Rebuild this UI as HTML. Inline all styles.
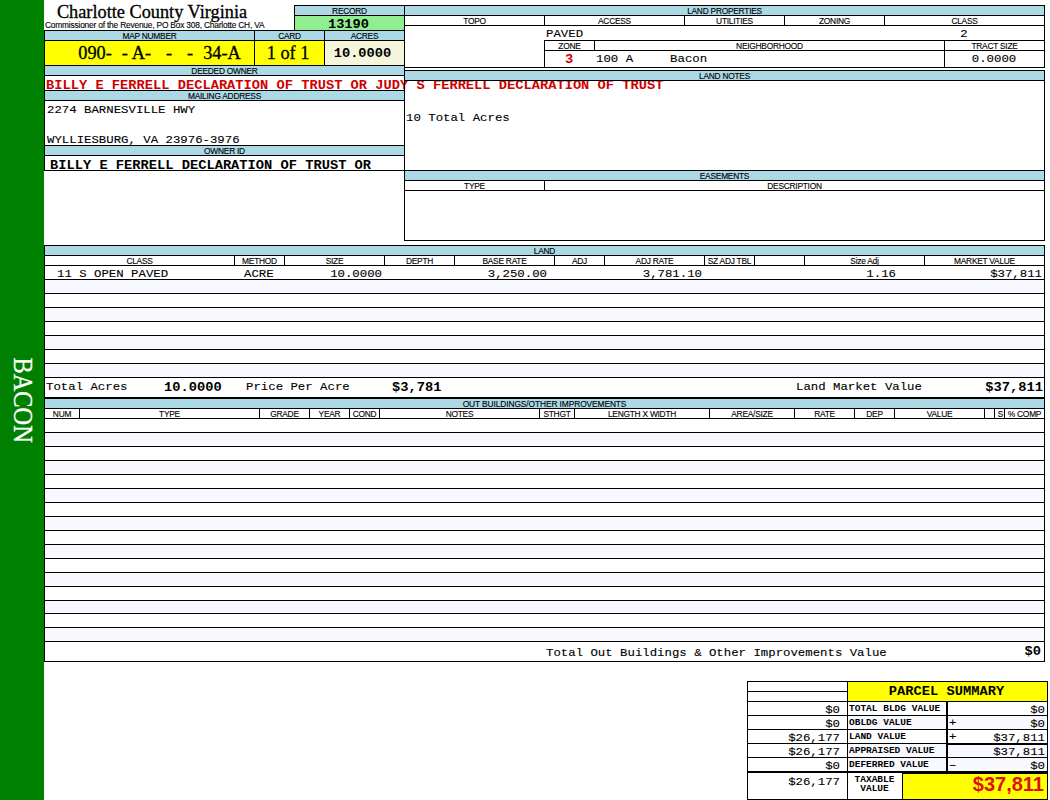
<!DOCTYPE html>
<html><head><meta charset="utf-8"><title>Charlotte County Virginia</title>
<style>
html,body{margin:0;padding:0;background:#fff}
body{width:1050px;height:800px;position:relative;overflow:hidden;font-family:"Liberation Sans",sans-serif}
.b{position:absolute;box-sizing:border-box;border:1px solid #000;overflow:hidden;white-space:nowrap}
.t{position:absolute;white-space:pre}
.t.m{transform:scaleY(.92);transform-origin:0 0}
.t.m.bold{transform:scaleY(.87)}
.t.ms{transform:scaleY(.9);transform-origin:0 0}
.t.m{-webkit-text-stroke:.12px currentColor}
.t.m.bold{-webkit-text-stroke:0}
.h{background:#add8e6;font:8.4px/11px "Liberation Sans",sans-serif;letter-spacing:-.25px;text-align:center;color:#000;-webkit-text-stroke:.12px #000}
.hw{font:8.4px/11px "Liberation Sans",sans-serif;letter-spacing:-.25px;text-align:center;color:#000;-webkit-text-stroke:.12px #000}
.y{background:#ffff00}
.lg{background:#90ee90}
.beige{background:#f5f5dc}
.alt{background:#f8f8ff}
.big{font:18.3px/23px "Liberation Serif",serif;text-align:center;-webkit-text-stroke:.3px #000}
.m{font:12.35px/13px "Liberation Mono",monospace;color:#000}
.mb{font:bold 13.72px/13px "Liberation Mono",monospace}
.ms{font:bold 9.5px/10px "Liberation Mono",monospace}
.bold{font-weight:bold;font-size:13.72px}
.sp{}
.red{color:#d00000}
.title{font:18.3px/20px "Liberation Serif",serif;-webkit-text-stroke:.3px #000}
.sub{font:8.4px/9px "Liberation Sans",sans-serif;letter-spacing:-.2px;-webkit-text-stroke:.12px #000}
.ln{position:absolute;background:#000}
.green{position:absolute;left:0;top:0;width:44px;height:800px;background:#008000}
.bacon{-webkit-text-stroke:.3px #fff;position:absolute;left:8.5px;top:350px;width:29px;height:100px;color:#fff;font:27.5px/29px "Liberation Serif",serif;writing-mode:vertical-rl;text-align:center;transform:scaleY(.887)}
.tv{position:absolute;right:3px;top:0px;font:bold 20px/24px "Liberation Sans",sans-serif;color:#e01010}
</style></head>
<body>
<div class="green"></div>
<div class="bacon">BACON</div>
<div class="t title" style="left:44px;top:2px;width:216px;text-align:center">Charlotte County Virginia</div>
<div class="t sub" style="left:45px;top:21px;">Commissioner of the Revenue, PO Box 308, Charlotte CH, VA</div>
<div class="b h" style="left:44px;top:30px;width:211px;height:11px;">MAP NUMBER</div>
<div class="b h" style="left:254px;top:30px;width:71px;height:11px;">CARD</div>
<div class="b h" style="left:324px;top:30px;width:81px;height:11px;">ACRES</div>
<div class="b y big" style="left:44px;top:40px;width:211px;height:26px;padding-left:20px;line-height:25px;white-space:pre;word-spacing:.42px">090-  - A-   -   -  34-A</div>
<div class="b y big" style="left:254px;top:40px;width:71px;height:26px;padding-right:3px;line-height:25px">1 of 1</div>
<div class="b beige" style="left:324px;top:40px;width:81px;height:26px;"></div>
<div class="t m bold" style="left:324px;top:47.5px;width:77px;text-align:center">10.0000</div>
<div class="b h" style="left:294px;top:5px;width:111px;height:11px;">RECORD</div>
<div class="b lg" style="left:294px;top:15px;width:111px;height:16px;"></div>
<div class="t m bold" style="left:294px;top:19.0px;width:109px;text-align:center">13190</div>
<div class="b h" style="left:44px;top:65px;width:361px;height:11px;">DEEDED OWNER</div>
<div class="b " style="left:44px;top:75px;width:361px;height:16px;"></div>
<div class="b h" style="left:44px;top:90px;width:361px;height:11px;">MAILING ADDRESS</div>
<div class="b " style="left:44px;top:100px;width:361px;height:46px;"></div>
<div class="b h" style="left:44px;top:145px;width:361px;height:11px;">OWNER ID</div>
<div class="b " style="left:44px;top:155px;width:361px;height:16px;"></div>
<div class="t m red bold" style="left:46px;top:79.5px;">BILLY E FERRELL DECLARATION OF TRUST OR JUDY S FERRELL DECLARATION OF TRUST</div>
<div class="t m" style="left:47px;top:105.0px;">2274 BARNESVILLE HWY</div>
<div class="t m" style="left:47px;top:135.0px;">WYLLIESBURG, VA 23976-3976</div>
<div class="t m bold" style="left:50px;top:159.5px;">BILLY E FERRELL DECLARATION OF TRUST OR</div>
<div class="b h" style="left:404px;top:5px;width:641px;height:11px;">LAND PROPERTIES</div>
<div class="b " style="left:404px;top:15px;width:641px;height:53px;"></div>
<div class="b hw" style="left:404px;top:15px;width:141px;height:11px;">TOPO</div>
<div class="b hw" style="left:544px;top:15px;width:141px;height:11px;">ACCESS</div>
<div class="b hw" style="left:684px;top:15px;width:101px;height:11px;">UTILITIES</div>
<div class="b hw" style="left:784px;top:15px;width:101px;height:11px;">ZONING</div>
<div class="b hw" style="left:884px;top:15px;width:161px;height:11px;">CLASS</div>
<div class="b hw" style="left:544px;top:40px;width:51px;height:11px;">ZONE</div>
<div class="b hw" style="left:594px;top:40px;width:351px;height:11px;">NEIGHBORHOOD</div>
<div class="b hw" style="left:944px;top:40px;width:101px;height:11px;">TRACT SIZE</div>
<div class="b " style="left:544px;top:50px;width:501px;height:18px;"></div>
<div class="b " style="left:944px;top:50px;width:101px;height:18px;"></div>
<div class="t m" style="left:546px;top:28.5px;">PAVED</div>
<div class="t m" style="left:884px;top:28.5px;width:160px;text-align:center">2</div>
<div class="t m red bold" style="left:544px;top:53.5px;width:50px;text-align:center">3</div>
<div class="t m" style="left:596px;top:54.0px;">100 A&nbsp;&nbsp;&nbsp;&nbsp;&nbsp;Bacon</div>
<div class="t m" style="left:944px;top:54.0px;width:100px;text-align:center">0.0000</div>
<div class="b " style="left:404px;top:80px;width:641px;height:91px;"></div>
<div class="b h" style="left:404px;top:70px;width:641px;height:11px;">LAND NOTES</div>
<div class="t m" style="left:406px;top:112.5px;">10 Total Acres</div>
<div class="b h" style="left:404px;top:170px;width:641px;height:11px;">EASEMENTS</div>
<div class="b hw" style="left:404px;top:180px;width:141px;height:11px;">TYPE</div>
<div class="b hw" style="left:544px;top:180px;width:501px;height:11px;">DESCRIPTION</div>
<div class="b " style="left:404px;top:190px;width:641px;height:51px;"></div>
<div class="b h" style="left:44px;top:245px;width:1001px;height:11px;">LAND</div>
<div class="b hw" style="left:44px;top:255px;width:191px;height:11px;">CLASS</div>
<div class="b hw" style="left:234px;top:255px;width:51px;height:11px;">METHOD</div>
<div class="b hw" style="left:284px;top:255px;width:101px;height:11px;">SIZE</div>
<div class="b hw" style="left:384px;top:255px;width:71px;height:11px;">DEPTH</div>
<div class="b hw" style="left:454px;top:255px;width:101px;height:11px;">BASE RATE</div>
<div class="b hw" style="left:554px;top:255px;width:51px;height:11px;">ADJ</div>
<div class="b hw" style="left:604px;top:255px;width:101px;height:11px;">ADJ RATE</div>
<div class="b hw" style="left:704px;top:255px;width:51px;height:11px;">SZ ADJ TBL</div>
<div class="b hw" style="left:754px;top:255px;width:51px;height:11px;"></div>
<div class="b hw" style="left:804px;top:255px;width:121px;height:11px;">Size Adj</div>
<div class="b hw" style="left:924px;top:255px;width:121px;height:11px;">MARKET VALUE</div>
<div class="b " style="left:44px;top:265px;width:1001px;height:15px;"></div>
<div class="b alt" style="left:44px;top:279px;width:1001px;height:15px;"></div>
<div class="b " style="left:44px;top:293px;width:1001px;height:15px;"></div>
<div class="b alt" style="left:44px;top:307px;width:1001px;height:15px;"></div>
<div class="b " style="left:44px;top:321px;width:1001px;height:15px;"></div>
<div class="b alt" style="left:44px;top:335px;width:1001px;height:15px;"></div>
<div class="b " style="left:44px;top:349px;width:1001px;height:15px;"></div>
<div class="b alt" style="left:44px;top:363px;width:1001px;height:15px;"></div>
<div class="b " style="left:44px;top:377px;width:1001px;height:21px;"></div>
<div class="t m" style="left:57px;top:269.0px;">11 S OPEN PAVED</div>
<div class="t m" style="left:244px;top:269.0px;">ACRE</div>
<div class="t m" style="left:284px;top:269.0px;width:98px;text-align:right">10.0000</div>
<div class="t m" style="left:454px;top:269.0px;width:93px;text-align:right">3,250.00</div>
<div class="t m" style="left:604px;top:269.0px;width:98px;text-align:right">3,781.10</div>
<div class="t m" style="left:804px;top:269.0px;width:92px;text-align:right">1.16</div>
<div class="t m" style="left:924px;top:269.0px;width:118px;text-align:right">$37,811</div>
<div class="t m" style="left:46px;top:382.0px;">Total Acres</div>
<div class="t m bold" style="left:164px;top:381.5px;">10.0000</div>
<div class="t m" style="left:246px;top:382.0px;">Price Per Acre</div>
<div class="t m bold" style="left:392px;top:381.5px;">$3,781</div>
<div class="t m" style="left:796px;top:382.0px;">Land Market Value</div>
<div class="t m bold" style="left:900px;top:381.5px;width:143px;text-align:right">$37,811</div>
<div class="b h" style="left:44px;top:398px;width:1001px;height:11px;letter-spacing:-.1px">OUT BUILDINGS/OTHER IMPROVEMENTS</div>
<div class="b hw" style="left:44px;top:408px;width:36px;height:11px;">NUM</div>
<div class="b hw" style="left:79px;top:408px;width:181px;height:11px;">TYPE</div>
<div class="b hw" style="left:259px;top:408px;width:51px;height:11px;">GRADE</div>
<div class="b hw" style="left:309px;top:408px;width:41px;height:11px;">YEAR</div>
<div class="b hw" style="left:349px;top:408px;width:31px;height:11px;">COND</div>
<div class="b hw" style="left:379px;top:408px;width:161px;height:11px;">NOTES</div>
<div class="b hw" style="left:539px;top:408px;width:36px;height:11px;">STHGT</div>
<div class="b hw" style="left:574px;top:408px;width:136px;height:11px;">LENGTH X WIDTH</div>
<div class="b hw" style="left:709px;top:408px;width:86px;height:11px;">AREA/SIZE</div>
<div class="b hw" style="left:794px;top:408px;width:61px;height:11px;">RATE</div>
<div class="b hw" style="left:854px;top:408px;width:41px;height:11px;">DEP</div>
<div class="b hw" style="left:894px;top:408px;width:91px;height:11px;">VALUE</div>
<div class="b hw" style="left:984px;top:408px;width:11px;height:11px;"></div>
<div class="b hw" style="left:994px;top:408px;width:11px;height:11px;padding-left:2px">S</div>
<div class="b hw" style="left:1004px;top:408px;width:41px;height:11px;">% COMP</div>
<div class="b " style="left:44px;top:418px;width:1001px;height:15px;"></div>
<div class="b alt" style="left:44px;top:432px;width:1001px;height:15px;"></div>
<div class="b " style="left:44px;top:446px;width:1001px;height:15px;"></div>
<div class="b alt" style="left:44px;top:460px;width:1001px;height:15px;"></div>
<div class="b " style="left:44px;top:474px;width:1001px;height:15px;"></div>
<div class="b alt" style="left:44px;top:488px;width:1001px;height:15px;"></div>
<div class="b " style="left:44px;top:502px;width:1001px;height:15px;"></div>
<div class="b alt" style="left:44px;top:516px;width:1001px;height:15px;"></div>
<div class="b " style="left:44px;top:530px;width:1001px;height:15px;"></div>
<div class="b alt" style="left:44px;top:544px;width:1001px;height:15px;"></div>
<div class="b " style="left:44px;top:558px;width:1001px;height:15px;"></div>
<div class="b alt" style="left:44px;top:572px;width:1001px;height:15px;"></div>
<div class="b " style="left:44px;top:586px;width:1001px;height:15px;"></div>
<div class="b alt" style="left:44px;top:600px;width:1001px;height:14px;"></div>
<div class="b " style="left:44px;top:613px;width:1001px;height:15px;"></div>
<div class="b alt" style="left:44px;top:627px;width:1001px;height:15px;"></div>
<div class="b " style="left:44px;top:641px;width:1001px;height:21px;"></div>
<div class="t m" style="left:546px;top:647.5px;">Total Out Buildings &amp; Other Improvements Value</div>
<div class="t m bold" style="left:900px;top:646.0px;width:141px;text-align:right">$0</div>
<div class="b " style="left:747px;top:681px;width:101px;height:11px;"></div>
<div class="b " style="left:747px;top:691px;width:101px;height:11px;"></div>
<div class="b y" style="left:847px;top:681px;width:201px;height:21px;"></div>
<div class="t m bold" style="left:847px;top:686.0px;width:199px;text-align:center">PARCEL SUMMARY</div>
<div class="b " style="left:747px;top:701px;width:101px;height:15px;"></div>
<div class="b " style="left:847px;top:701px;width:101px;height:15px;"></div>
<div class="b " style="left:947px;top:701px;width:101px;height:15px;"></div>
<div class="t m" style="left:747px;top:705.0px;width:93px;text-align:right">$0</div>
<div class="t ms" style="left:849px;top:705.0px;">TOTAL BLDG VALUE</div>
<div class="t m" style="left:947px;top:705.0px;width:98px;text-align:right">$0</div>
<div class="b " style="left:747px;top:715px;width:101px;height:15px;"></div>
<div class="b alt" style="left:847px;top:715px;width:101px;height:15px;"></div>
<div class="b alt" style="left:947px;top:715px;width:101px;height:15px;"></div>
<div class="t m" style="left:747px;top:719.0px;width:93px;text-align:right">$0</div>
<div class="t ms" style="left:849px;top:719.0px;">OBLDG VALUE</div>
<div class="t m" style="left:949px;top:718.0px;">+</div>
<div class="t m" style="left:947px;top:719.0px;width:98px;text-align:right">$0</div>
<div class="b " style="left:747px;top:729px;width:101px;height:15px;"></div>
<div class="b " style="left:847px;top:729px;width:101px;height:15px;"></div>
<div class="b " style="left:947px;top:729px;width:101px;height:15px;"></div>
<div class="t m" style="left:747px;top:733.0px;width:93px;text-align:right">$26,177</div>
<div class="t ms" style="left:849px;top:733.0px;">LAND VALUE</div>
<div class="t m" style="left:949px;top:732.0px;">+</div>
<div class="t m" style="left:947px;top:733.0px;width:98px;text-align:right">$37,811</div>
<div class="b " style="left:747px;top:743px;width:101px;height:15px;"></div>
<div class="b alt" style="left:847px;top:743px;width:101px;height:15px;"></div>
<div class="b alt" style="left:947px;top:743px;width:101px;height:15px;"></div>
<div class="t m" style="left:747px;top:747.0px;width:93px;text-align:right">$26,177</div>
<div class="t ms" style="left:849px;top:747.0px;">APPRAISED VALUE</div>
<div class="t m" style="left:947px;top:747.0px;width:98px;text-align:right">$37,811</div>
<div class="b " style="left:747px;top:757px;width:101px;height:15px;"></div>
<div class="b alt" style="left:847px;top:757px;width:101px;height:15px;"></div>
<div class="b alt" style="left:947px;top:757px;width:101px;height:15px;"></div>
<div class="t m" style="left:747px;top:761.0px;width:93px;text-align:right">$0</div>
<div class="t ms" style="left:849px;top:761.0px;">DEFERRED VALUE</div>
<div class="t m" style="left:949px;top:759.5px;">&#8211;</div>
<div class="t m" style="left:947px;top:761.0px;width:98px;text-align:right">$0</div>
<div class="b " style="left:747px;top:771px;width:101px;height:29px;"></div>
<div class="t m" style="left:747px;top:776.5px;width:93px;text-align:right">$26,177</div>
<div class="b " style="left:847px;top:771px;width:56px;height:29px;"></div>
<div class="t ms" style="left:847px;top:776.0px;width:55px;text-align:center;line-height:10px">TAXABLE
VALUE</div>
<div class="b y" style="left:902px;top:771px;width:146px;height:29px;"><span class="tv">$37,811</span></div>
<div class="ln" style="left:947px;top:743px;width:100px;height:2px"></div>
<div class="ln" style="left:747px;top:771px;width:301px;height:2px"></div>
<div class="ln" style="left:902px;top:771px;width:146px;height:3px"></div>
<div class="ln" style="left:946px;top:701px;width:2px;height:71px"></div>
</body></html>
